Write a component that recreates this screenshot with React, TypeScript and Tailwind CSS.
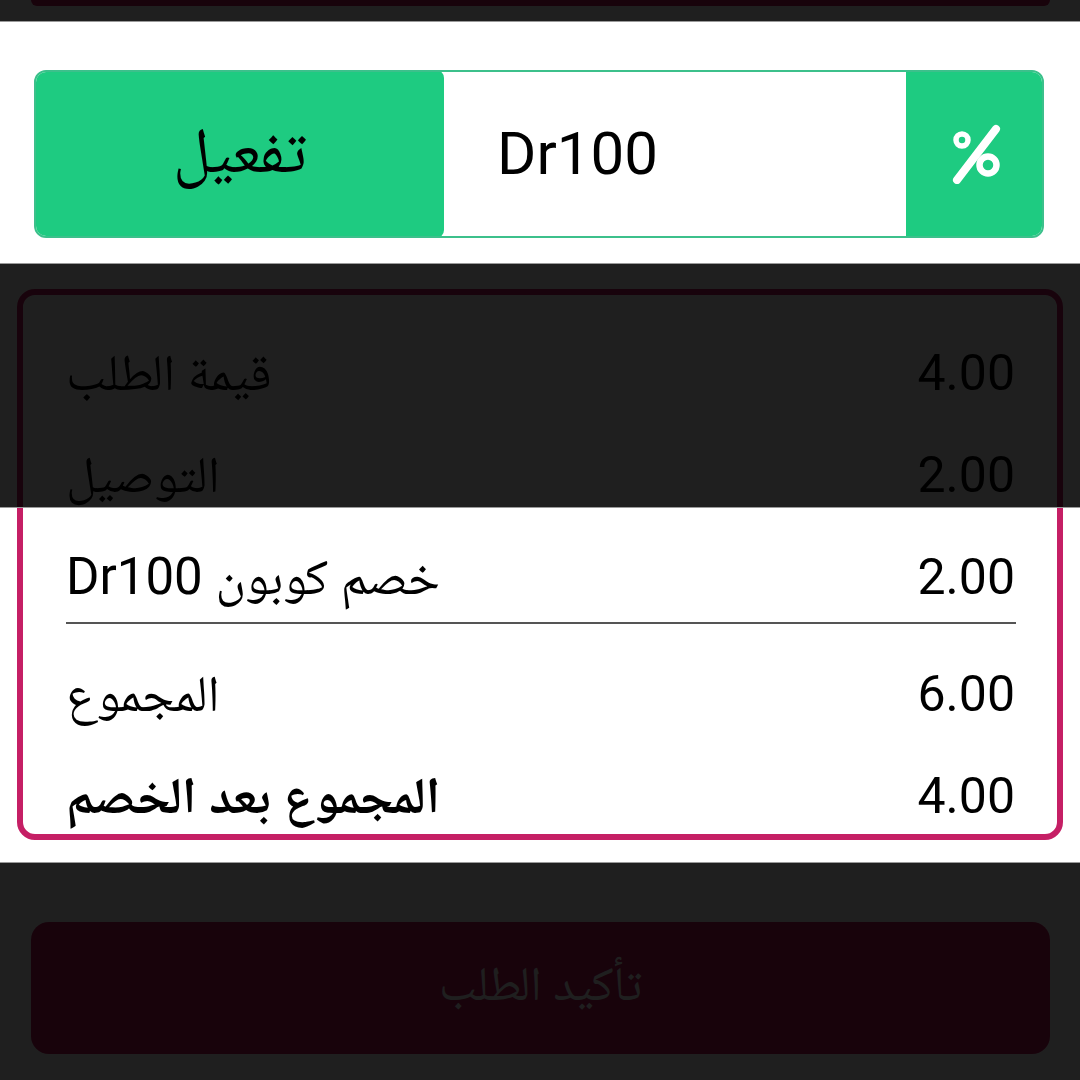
import React from 'react';

const FONT = "font-['Roboto','Noto_Naskh_Arabic','Noto_Sans_Arabic','DejaVu_Sans',sans-serif]";

interface RowProps {
  label: string;
  value: string;
  bold?: boolean;
}

const Row: React.FC<RowProps> = ({ label, value, bold }) => (
  <div className="flex h-[56px] items-baseline justify-between text-[51px] leading-[56px] text-black">
    <span dir="rtl" className={bold ? 'font-bold' : 'font-normal'}>
      {label}
    </span>
    <span className="text-[50px]">{value}</span>
  </div>
);

const PercentIcon = () => (
  <svg width="56" height="60" viewBox="0 0 56 60" fill="none">
    <circle cx="13" cy="16" r="6" stroke="white" strokeWidth="5.5" />
    <circle cx="39" cy="41" r="8.5" stroke="white" strokeWidth="6.5" />
    <line x1="47" y1="5" x2="8" y2="56" stroke="white" strokeWidth="8" strokeLinecap="round" />
  </svg>
);

const App: React.FC = () => {
  return (
    <div className={`relative h-[1080px] w-[1080px] overflow-hidden bg-white ${FONT}`}>
      {/* previous block, mostly cut off */}
      <div className="ml-[31px] mr-[30px] h-[6px] rounded-b-[6px] bg-[#c2185b]" />

      {/* coupon row */}
      <div className="ml-[34px] mr-[36px] mt-[64px] flex h-[168px] overflow-hidden rounded-[12px] border-2 border-[#3cc08b]">
        <button className="-my-[2px] w-[408px] rounded-[8px] bg-[#1ecb81] pb-[6px] text-[64px] text-black">
          تفعيل
        </button>
        <div className="flex flex-1 items-center bg-white pl-[53px] text-[60px] text-black">Dr100</div>
        <div className="-my-[2px] flex w-[136px] items-center justify-center rounded-r-[10px] bg-[#1ecb81] pl-[6px]">
          <PercentIcon />
        </div>
      </div>

      {/* order summary */}
      <div className="ml-[17px] mr-[17px] mt-[51px] rounded-[18px] border-[6px] border-[#c51f65] pb-[10px] pl-[43px] pr-[42px] pt-[50px]">
        <div className="flex flex-col gap-[46px]">
          <Row label="قيمة الطلب" value="4.00" />
          <Row label="التوصيل" value="2.00" />
          <Row label="خصم كوبون Dr100" value="2.00" />
        </div>
        <div className="mr-[-1px] mt-[17px] h-[1.5px] bg-[#555]" />
        <div className="mt-[42px] flex flex-col gap-[46px]">
          <Row label="المجموع" value="6.00" />
          <Row label="المجموع بعد الخصم" value="4.00" bold />
        </div>
      </div>

      <button className="ml-[31px] mr-[30px] mt-[82px] flex h-[132px] w-[1019px] items-center justify-center rounded-[18px] bg-[#c2185b] pb-[8px] text-[48px] text-white">
        تأكيد الطلب
      </button>

      {/* tutorial overlay, with two holes */}
      <div className="absolute left-0 right-0 top-0 h-[22px] border-b border-[#9a9a9a] bg-black/[0.88]" />
      <div className="absolute left-0 right-0 top-[263px] h-[245px] border-y border-[#9a9a9a] bg-black/[0.88]" />
      <div className="absolute bottom-0 left-0 right-0 top-[862px] border-t border-[#9a9a9a] bg-black/[0.88]" />
    </div>
  );
};

export default App;
